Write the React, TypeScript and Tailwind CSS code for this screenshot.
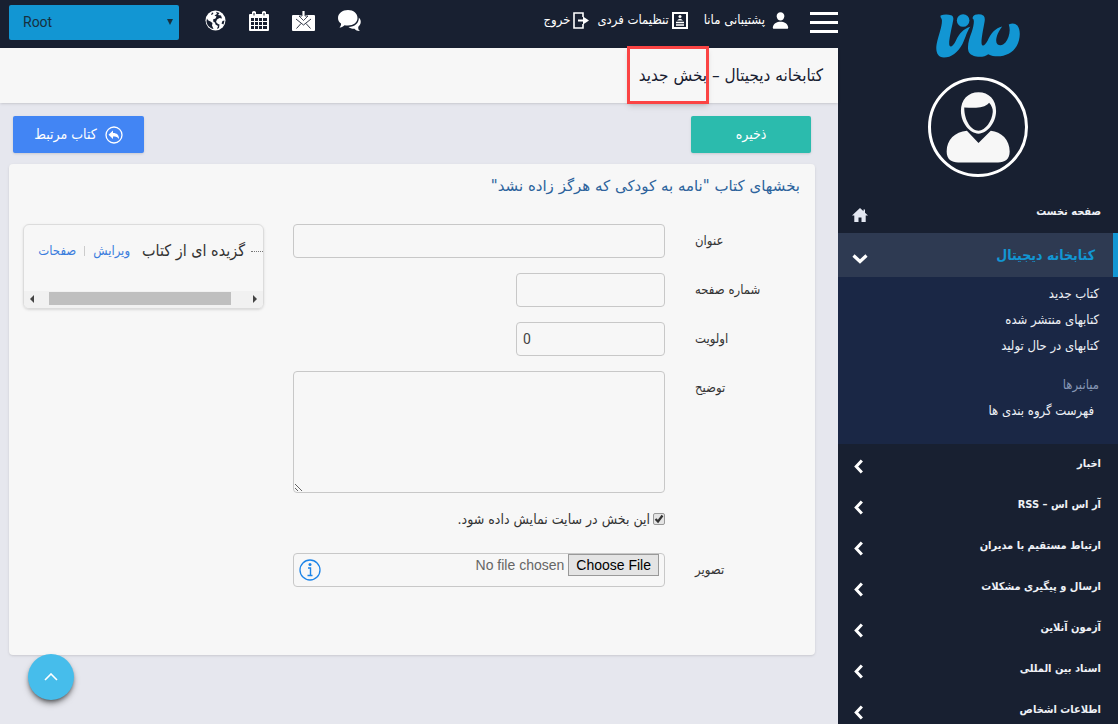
import { useState } from 'react'
import { IoPerson } from 'react-icons/io5'

const bookLinks = ['کتاب جدید', 'کتابهای منتشر شده', 'کتابهای در حال تولید']

const sections = [
  'اخبار',
  'آر اس اس – RSS',
  'ارتباط مستقیم با مدیران',
  'ارسال و پیگیری مشکلات',
  'آزمون آنلاین',
  'اسناد بین المللی',
  'اطلاعات اشخاص',
]

const fieldClass = 'rounded border border-[#c8c8c8] bg-[#f7f7f7] text-[#444] outline-none'

function Logo() {
  return (
    <svg viewBox="0 0 254 132" className="h-[44px] w-[84px]" fill="#1296d3">
      <path d="M14 4Q30 -2 48 4Q54 8 52 18C46 50 39 76 40 92C42 104 52 96 60 80C70 58 84 44 104 38C94 50 90 70 80 90C66 116 46 131 24 131C4 131 -2 112 2 90C8 62 18 40 18 20C18 10 12 12 14 4Z" />
      <path d="M118 2Q134 -2 144 5Q149 10 147 22C142 50 136 78 138 90C141 100 148 94 156 80C166 56 180 42 200 37C190 50 182 66 182 80C182 96 200 98 210 86C220 72 227 50 220 31Q236 24 246 34C257 48 255 76 244 96C228 124 188 136 158 121C146 132 110 132 100 116C92 100 100 74 108 54C114 36 118 14 110 12Q112 4 118 2Z" />
      <circle cx="82" cy="19" r="19" />
    </svg>
  )
}

function Avatar() {
  return (
    <div className="flex h-[100px] w-[100px] items-center justify-center rounded-full border-3 border-white">
      <svg viewBox="320 262 202 222" className="h-[74px] w-[67px]" fill="#f7f7f7">
        <path d="M386 384C350 388 325 410 325 447C325 471 340 480 360 480H480C500 480 515 471 515 447C515 410 490 388 458 384L421 421Z" />
        <path
          fillRule="evenodd"
          d="M421 268C390 268 368 290 368 325C368 360 395 393 421 393C447 393 474 360 474 325C474 290 452 268 421 268ZM378 314C402 315 436 320 453 300C460 308 465 318 464 328C462 355 442 384 421 384C400 384 378 355 378 314Z"
        />
      </svg>
    </div>
  )
}

function HomeIcon() {
  return (
    <svg viewBox="0 0 16 14" className="mt-1 h-[14px] w-4" fill="#e4e8f2">
      <path d="M8 0L0 7.5H2.3V14H6.5V9.5H9.5V14H13.7V7.5H16L13 4.7V1.5H11.5V3.2Z" />
    </svg>
  )
}

function ChevronDownIcon() {
  return (
    <svg viewBox="0 0 16 16" className="mt-2 h-4 w-4" fill="none" stroke="#fff" strokeWidth="3.200">
      <path d="M1.500 4.500L8 10.500L14.500 4.500" />
    </svg>
  )
}

function ChevronLeftIcon() {
  return (
    <svg viewBox="0 0 16 16" className="mt-[3px] h-[15px] w-[15px]" fill="none" stroke="#fff" strokeWidth="3.200">
      <path d="M10.500 1.500L4.500 8L10.500 14.500" />
    </svg>
  )
}

function ChatIcon() {
  return (
    <svg viewBox="0 0 23 22" className="h-[22px] w-[23px]" fill="#fff">
      <path d="M10 0C15.500 0 19.500 3.300 19.500 8C19.500 12.500 15.500 15.500 10 15.500C8.500 15.500 7.500 15.400 6.500 15.200C5 16.800 3 17.600 1.500 17.600C2.800 16.500 3.200 15 3 13.600C1.200 12.400 0 10.500 0 8C0 3.300 4.500 0 10 0Z" />
      <path d="M20.800 7.500C22.300 9 23 10.600 22.700 12.600C22.500 14.400 21.700 15.700 20.300 16.700C20 18.500 20.500 20 22 21C19.800 21.200 17.800 20.300 16.500 18.800C14.200 19 12 18.200 10.500 17C16.500 17 21.300 13 20.800 7.500Z" />
    </svg>
  )
}

function GlobeIcon() {
  return (
    <svg viewBox="0 0 21 21" className="h-[21px] w-[21px]">
      <circle cx="10.500" cy="10.500" r="10" fill="#fff" />
      <path
        fill="#182031"
        d="M2 8.500C2.500 10 4 11 5.500 11.500L7.500 13L7 15.500L8.500 19C5 18.500 1.500 15 1.500 11ZM11 1.800L14.500 3L13 5L16 5.500L17 8.500L14.500 8L12 9.500L11 12L13 14L14.500 14.500L14 18L12 19L13 16L10.500 14.500L10 12.500L8.500 12L8 9.500L10.500 8.500L11.500 6.500L9.500 5.500L12 4ZM7 2.500L8.500 3L7.500 4.500L6 5ZM17.500 11L19.500 10.500L18.500 14.500L16.500 13.500Z"
      />
    </svg>
  )
}

function CalendarIcon() {
  return (
    <svg viewBox="0 0 20 20" className="h-5 w-5">
      <path fill="#fff" d="M1 3H3V1Q5 -1 7 1V3H13V1Q15 -1 17 1V3H19Q20 3 20 4V19Q20 20 19 20H1Q0 20 0 19V4Q0 3 1 3Z" />
      <path stroke="#182031" fill="none" d="M5 2V4.500M15 2V4.500" />
      <path
        fill="#182031"
        d="M2 7H5V10H2ZM6 7H9V10H6ZM10 7H13V10H10ZM14 7H18V10H14ZM2 11H5V14H2ZM6 11H9V14H6ZM10 11H13V14H10ZM14 11H18V14H14ZM2 15H5V18H2ZM6 15H9V18H6ZM10 15H13V18H10ZM14 15H18V18H14Z"
      />
    </svg>
  )
}

function InboxIcon() {
  return (
    <svg viewBox="0 0 23 20" className="h-5 w-[23px]" fill="none">
      <path fill="#fff" d="M1 4H22Q23 4 23 5V19Q23 20 22 20H1Q0 20 0 19V5Q0 4 1 4Z" />
      <path fill="#fff" stroke="#182031" strokeWidth="0.800" d="M10 -1V5H7L11.500 9.500L16 5H13V-1Z" />
      <path stroke="#182031" strokeWidth="0.900" d="M4 8L11.500 14L19 8M4.500 17.500L9 12.500M18.500 17.500L14 12.500" />
    </svg>
  )
}

function ProfileIcon() {
  return (
    <svg viewBox="0 0 16 17" className="h-[17px] w-4" fill="none" stroke="#fff">
      <rect x="1" y="1" width="14" height="15" strokeWidth="2" />
      <circle cx="8" cy="4.500" r="1.500" fill="#fff" stroke="none" />
      <path d="M5 8.500Q8 5 11 8.500Z" fill="#fff" stroke="none" />
      <path d="M4 10.500H12M4 13H12" strokeWidth="1.300" />
    </svg>
  )
}

function ExitIcon() {
  return (
    <svg viewBox="0 0 16 17" className="h-[17px] w-4" fill="none" stroke="#fff" strokeWidth="1.600">
      <path d="M10 5V1H1V16H10V12" />
      <path d="M5 7.500H10V4.500L16 8.500L10 12.500V9.500H5Z" fill="#fff" stroke="none" />
    </svg>
  )
}

function ReplyIcon() {
  return (
    <svg viewBox="0 0 18 18" className="h-[18px] w-[18px]" fill="none">
      <circle cx="9" cy="9" r="8" stroke="#fff" strokeWidth="1.300" />
      <path fill="#fff" d="M8 4.500V7C12 7 14 9 14 13C12.500 11 11 10.500 8 10.500V13L3.500 8.700Z" />
    </svg>
  )
}

function InfoIcon() {
  return (
    <svg viewBox="0 0 22 22" className="h-[22px] w-[22px]" fill="none" stroke="#1c84e8">
      <circle cx="11" cy="11" r="10" strokeWidth="1.300" />
      <circle cx="11" cy="5.500" r="1.500" fill="#1c84e8" stroke="none" />
      <path d="M9 9H11.500V16.500M8.500 16.500H13.500" strokeWidth="1.400" />
    </svg>
  )
}

function Sidebar() {
  return (
    <aside className="flex w-[281px] shrink-0 flex-col border-r border-white bg-[#182031] text-[11px] font-bold text-[#eef1f6]">
      <div className="flex flex-col items-center gap-[19px] pt-[14px]">
        <Logo />
        <Avatar />
      </div>
      <a href="#home" className="mt-[15px] flex h-[41px] shrink-0 items-center justify-between pr-[17px] pl-[14px]">
        صفحه نخست
        <HomeIcon />
      </a>
      <a href="#library" className="flex h-[44px] shrink-0 items-center justify-between border-r-5 border-[#1296d3] bg-[#2e3a52] pr-[18px] pl-[14px] text-[14px] text-[#1296d3]">
        کتابخانه دیجیتال
        <ChevronDownIcon />
      </a>
      <nav className="h-[167px] shrink-0 bg-[#1a2745] pt-1 pr-[19px] text-[13px] leading-[26px] font-normal">
        {bookLinks.map((link) => (
          <a key={link} href="#books" className="block">
            {link}
          </a>
        ))}
        <div className="mt-[13px] text-[#8797b5]">میانبرها</div>
        <a href="#groups" className="block pr-[5px]">
          فهرست گروه بندی ها
        </a>
      </nav>
      {sections.map((section) => (
        <a key={section} href="#section" className="flex h-[41px] shrink-0 items-center justify-between pr-[17px] pl-[14px]">
          {section}
          <ChevronLeftIcon />
        </a>
      ))}
    </aside>
  )
}

function TopBar() {
  return (
    <header className="flex h-12 shrink-0 items-center justify-between bg-[#182031] pb-2 text-[13px] text-white">
      <div className="flex items-center">
        <button type="button" aria-label="منو" className="flex flex-col gap-[6px] pt-[5px]">
          <span className="h-[3px] w-7 bg-white" />
          <span className="h-[3px] w-7 bg-white" />
          <span className="h-[3px] w-7 bg-white" />
        </button>
        <a href="#support" className="mr-5 flex items-center gap-[6px]">
          <IoPerson className="h-[19px] w-[19px]" />
          پشتیبانی مانا
        </a>
        <a href="#profile" className="mr-4 flex items-center gap-[3px]">
          <ProfileIcon />
          تنظیمات فردی
        </a>
        <a href="#exit" className="mr-2 flex items-center gap-[3px]">
          <ExitIcon />
          خروج
        </a>
      </div>
      <div className="flex items-center pt-1 pl-[9px]">
        <div className="flex items-center gap-[23px] pb-[3px]">
          <a href="#chat" aria-label="گفتگو"><ChatIcon /></a>
          <a href="#inbox" aria-label="پیامها"><InboxIcon /></a>
          <a href="#calendar" aria-label="تقویم"><CalendarIcon /></a>
          <a href="#site" aria-label="سایت"><GlobeIcon /></a>
        </div>
        <div dir="ltr" className="relative mr-[26px]">
          <select aria-label="Root" className="h-[35px] w-[170px] appearance-none rounded-xs bg-[#1296d3] px-[14px] font-['Roboto',sans-serif] text-[14px] text-[#17303f]">
            <option>Root</option>
          </select>
          <span className="pointer-events-none absolute top-[14px] right-[6px] border-x-3 border-t-6 border-x-transparent border-t-[#17303f]" />
        </div>
      </div>
    </header>
  )
}

function PartForm() {
  const [visible, setVisible] = useState(true)
  return (
    <form id="part-form" className="flex min-w-0 flex-1 flex-col gap-[15px] text-[13px] text-[#333]">
      <div className="flex gap-[30px]">
        <label htmlFor="title" className="w-[105px] text-left leading-[34px]">عنوان</label>
        <input id="title" className={`h-[34px] min-w-0 flex-1 px-[6px] ${fieldClass}`} />
      </div>
      <div className="flex gap-[30px]">
        <label htmlFor="page" className="w-[105px] text-left leading-[34px]">شماره صفحه</label>
        <input id="page" className={`h-[34px] w-[149px] px-[6px] ${fieldClass}`} />
      </div>
      <div className="flex gap-[30px]">
        <label htmlFor="order" className="w-[105px] text-left leading-[34px]">اولویت</label>
        <input id="order" dir="ltr" defaultValue="0" className={`h-[34px] w-[149px] px-[6px] font-['Roboto',sans-serif] text-[14px] ${fieldClass}`} />
      </div>
      <div className="flex gap-[30px]">
        <label htmlFor="description" className="w-[105px] text-left leading-[34px]">توضیح</label>
        <textarea id="description" className={`h-[122px] min-w-0 flex-1 p-[6px] ${fieldClass}`} />
      </div>
      <div className="flex h-[30px] items-center gap-[3px] pr-[135px] pb-2 text-[14px]">
        <span className="relative flex">
          <input
            id="visible"
            type="checkbox"
            checked={visible}
            onChange={(e) => setVisible(e.target.checked)}
            className="h-3 w-3 appearance-none rounded-xs border border-[#999] bg-[#e4e4e4]"
          />
          {visible && (
            <svg viewBox="0 0 12 12" className="pointer-events-none absolute inset-0 h-3 w-3" fill="none" stroke="#333" strokeWidth="2.200">
              <path d="M2.500 6L5 8.500L9.500 2.500" />
            </svg>
          )}
        </span>
        <label htmlFor="visible">این بخش در سایت نمایش داده شود.</label>
      </div>
      <div className="flex gap-[30px]">
        <label htmlFor="image" className="w-[105px] text-left leading-[34px]">تصویر</label>
        <div className={`flex h-[34px] min-w-0 flex-1 items-center justify-between px-[5px] ${fieldClass}`}>
          <input
            id="image"
            type="file"
            className="h-8 w-[240px] font-['Liberation_Sans',sans-serif] text-[14px] text-[#666] file:me-1 file:h-[22px] file:border file:border-solid file:border-[#999] file:bg-[#e4e4e4] file:px-[7px] file:text-black"
          />
          <button type="button" aria-label="راهنما"><InfoIcon /></button>
        </div>
      </div>
    </form>
  )
}

function PartsPanel() {
  return (
    <div className="flex h-[85px] w-[241px] shrink-0 flex-col justify-between overflow-hidden rounded-md border border-[#dcdcdc] text-[#333] shadow">
      <div className="flex items-center pt-3 pl-[12px] text-[13px] whitespace-nowrap text-[#3b7ddd]">
        <span className="w-3 border-t border-dotted border-[#777]" />
        <span className="mr-[6px] text-[16px] leading-7 text-[#333]">گزیده ای از کتاب</span>
        <a href="#edit" className="mr-3">ویرایش</a>
        <span className="mx-2 h-[10px] w-px bg-[#ccc]" />
        <a href="#pages">صفحات</a>
      </div>
      <div className="flex h-[17px] items-center bg-[#f1f1f1] px-[6px] pb-[2px]">
        <span className="border-y-4 border-l-4 border-y-transparent border-l-[#444]" />
        <span className="flex flex-1 pr-[22px]">
          <span className="h-[13px] w-[182px] bg-[#bfbfbf]" />
        </span>
        <span className="border-y-4 border-r-4 border-y-transparent border-r-[#444]" />
      </div>
    </div>
  )
}

export default function App() {
  return (
    <div dir="rtl" className="flex h-screen overflow-hidden font-['DejaVu_Sans_Condensed','DejaVu_Sans',sans-serif]">
      <Sidebar />
      <div className="flex min-w-0 flex-1 flex-col bg-[#e6e7ee]">
        <TopBar />
        <div className="relative flex h-[55px] shrink-0 items-center bg-[#f7f7f7] pr-[15px] shadow">
          <h1 className="text-[17px] font-normal text-[#182031]">کتابخانه دیجیتال – بخش جدید</h1>
          <span className="pointer-events-none absolute -top-[2px] right-[129px] h-[58px] w-[82px] border-3 border-[#fb4444] shadow-md" />
        </div>
        <div className="flex justify-between pt-[13px] pr-[27px] pl-[13px] text-[14px] text-white">
          <button type="submit" form="part-form" className="h-[37px] w-[120px] rounded-xs bg-[#2bbbad] shadow">
            ذخیره
          </button>
          <button type="button" className="flex h-[37px] w-[131px] items-center justify-center gap-2 rounded-xs bg-[#4285f4] shadow">
            <ReplyIcon />
            کتاب مرتبط
          </button>
        </div>
        <main className="mt-[11px] mr-[23px] ml-[9px] rounded bg-[#f7f7f7] pt-2 pr-[15px] pb-[68px] pl-[14px] shadow">
          <h2 className="font-['DejaVu_Sans',sans-serif] text-[15px] leading-7 text-[#2d639c]">بخشهای کتاب "نامه به کودکی که هرگز زاده نشد"</h2>
          <div className="mt-6 flex gap-[29px]">
            <PartForm />
            <PartsPanel />
          </div>
        </main>
      </div>
      <button
        type="button"
        aria-label="بالا"
        className="fixed bottom-6 left-7 flex h-[46px] w-[46px] items-center justify-center rounded-full bg-[#46bdeb] shadow-md shadow-black/50"
      >
        <svg viewBox="0 0 14 8" className="h-2 w-[14px]" fill="none" stroke="#fff" strokeWidth="1.600">
          <path d="M1 7L7 1L13 7" />
        </svg>
      </button>
    </div>
  )
}
